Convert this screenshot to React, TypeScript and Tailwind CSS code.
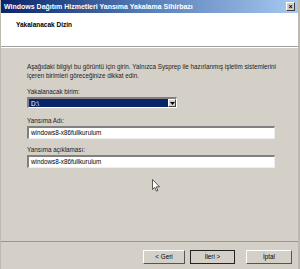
import React from 'react';

const font = { fontFamily: '"Liberation Sans", Arial, sans-serif' };

const Label: React.FC<{ children: React.ReactNode }> = ({ children }) => (
  <div className="text-[6.3px] leading-[8px] text-[#222]">{children}</div>
);

const TextBox: React.FC<{ value: string }> = ({ value }) => (
  <div className="h-[13px] w-[248px] bg-white border-t-2 border-l-2 border-t-[#808080] border-l-[#808080] border-b border-r border-b-[#eeeeee] border-r-[#eeeeee] flex items-center px-[2px] text-[6.3px] text-black">
    {value}
  </div>
);

const Btn: React.FC<{ label: string; focused?: boolean; w: string }> = ({ label, focused, w }) => (
  <div
    className={`${w} h-[14px] flex items-center justify-center text-[6.3px] text-black bg-[#d4d0c8] ${
      focused
        ? 'border border-[#222]'
        : 'border border-t-white border-l-white border-b-[#555] border-r-[#555]'
    }`}
  >
    {label}
  </div>
);

export default function App() {
  return (
    <div className="w-[300px] h-[269px] bg-[#d4d0c8] flex flex-col overflow-hidden border-l border-r-2 border-[#bdb9b1]" style={font}>
      {/* title bar */}
      <div className="h-[13px] shrink-0 flex items-center justify-between pl-[3px] pr-[3px] bg-gradient-to-r from-[#0a246a] via-[#5a7fb8] to-[#a6caf0]">
        <span className="text-white font-bold text-[7px] leading-none whitespace-nowrap">
          Windows Dağıtım Hizmetleri Yansıma Yakalama Sihirbazı
        </span>
        <div className="w-[9px] h-[9px] bg-[#d4d0c8] border border-t-white border-l-white border-b-[#404040] border-r-[#404040] flex items-center justify-center text-[7px] leading-none font-bold text-black">
          ×
        </div>
      </div>

      {/* header */}
      <div className="h-[34px] shrink-0 bg-white pl-[15px] pt-[7px] border-b border-[#a0a0a0]">
        <div className="text-[6.5px] font-bold text-black whitespace-nowrap">Yakalanacak Dizin</div>
      </div>
      <div className="h-px bg-white shrink-0" />

      {/* body */}
      <div className="flex-1 pl-[26px] pt-[14px] flex flex-col">
        <div className="text-[6.3px] leading-[9px] text-[#222] whitespace-nowrap">
          Aşağıdaki bilgiyi bu görüntü için girin. Yalnızca Sysprep ile hazırlanmış işletim sistemlerini
          <br />
          içeren birimleri göreceğinize dikkat edin.
        </div>

        <div className="mt-[8px]">
          <Label>Yakalanacak birim:</Label>
        </div>
        <div className="mt-[1px] w-[150px] h-[11px] bg-white border-t-2 border-l-2 border-t-[#808080] border-l-[#808080] border-b border-r border-b-white border-r-white flex">
          <div className="flex-1 bg-[#0a246a] text-white text-[6.3px] leading-[9px] pl-[2px]">D:\</div>
          <div className="w-[8px] h-full bg-[#d4d0c8] border border-t-white border-l-white border-b-[#404040] border-r-[#404040] flex items-center justify-center">
            <svg width="5" height="3" viewBox="0 0 5 3">
              <path d="M0 0h5L2.5 3z" fill="#000" />
            </svg>
          </div>
        </div>

        <div className="mt-[9px]">
          <Label>Yansıma Adı:</Label>
        </div>
        <div className="mt-[1px]">
          <TextBox value="windows8-x86fullkurulum" />
        </div>

        <div className="mt-[7px]">
          <Label>Yansıma açıklaması:</Label>
        </div>
        <div className="mt-[1px]">
          <TextBox value="windows8-x86fullkurulum" />
        </div>

        <div className="mt-[11px] ml-[125px]">
          <svg width="8" height="13" viewBox="0 0 8 13">
            <path d="M0.5 0.5v10l2.3-2.2 1.6 3.8 1.5-0.6-1.6-3.7h3.2z" fill="#fff" stroke="#333" strokeWidth="0.8" />
          </svg>
        </div>
      </div>

      {/* footer */}
      <div className="h-[28px] shrink-0 border-t border-t-[#9a9690] flex items-start justify-end gap-[5px] pr-[6px] pt-[8px]">
        <Btn label="< Geri" w="w-[42px]" />
        <Btn label="İleri >" w="w-[45px]" focused />
        <div className="w-[1px]" />
        <Btn label="İptal" w="w-[46px]" />
      </div>
    </div>
  );
}
